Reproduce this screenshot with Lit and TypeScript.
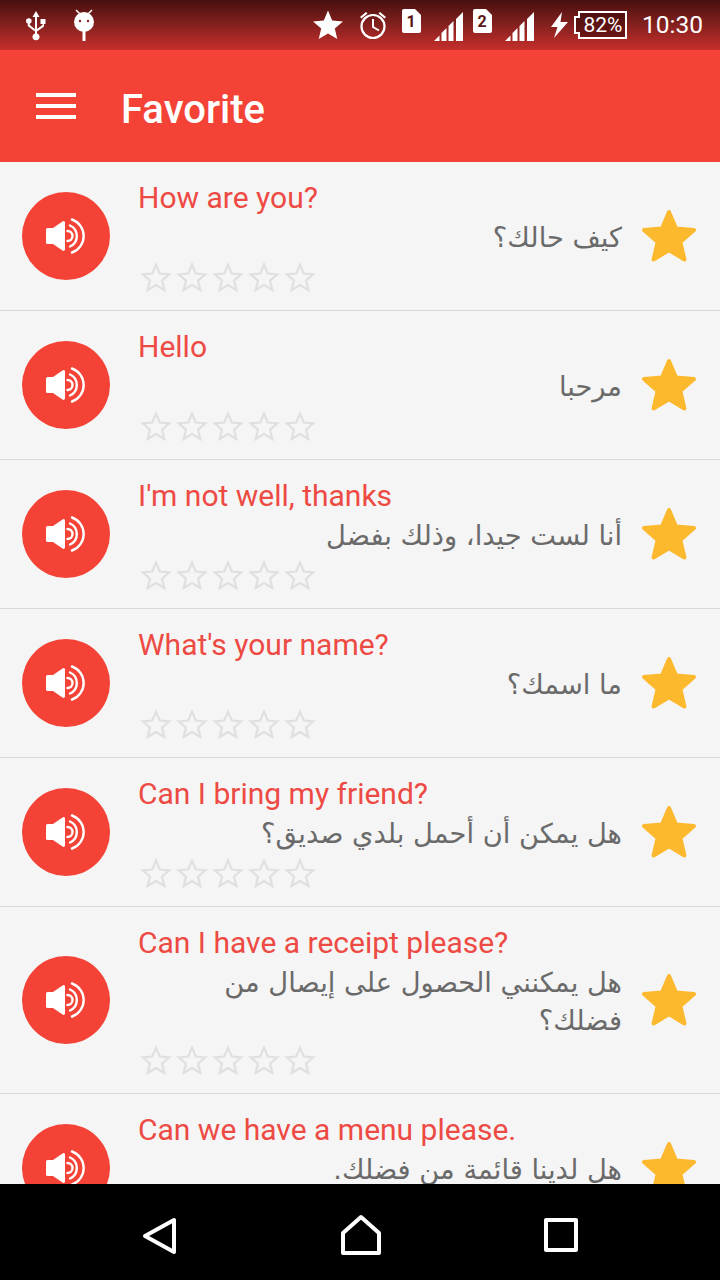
import { LitElement, html, css } from "lit";
import { customElement } from "lit/decorators.js";

const ROWS = [
  ["How are you?", "كيف حالك؟"],
  ["Hello", "مرحبا"],
  ["I'm not well, thanks", "أنا لست جيدا، وذلك بفضل"],
  ["What's your name?", "ما اسمك؟"],
  ["Can I bring my friend?", "هل يمكن أن أحمل بلدي صديق؟"],
  ["Can I have a receipt please?", "هل يمكنني الحصول على إيصال من فضلك؟"],
  ["Can we have a menu please.", "هل لدينا قائمة من فضلك."],
];

const STAR = "M12 17.27L18.18 21l-1.64-7.03L22 9.24l-7.19-.61L12 2 9.19 8.63 2 9.24l5.46 4.73L5.82 21z";

@customElement("app-root")
export class AppRoot extends LitElement {
  static styles = css`
    :host { display: flex; flex-direction: column; width: 720px; height: 1280px; overflow: hidden; font-family: Roboto, "Liberation Sans", sans-serif; background: #000; }
    .status { height: 50px; flex: none; display: flex; align-items: flex-start; background: linear-gradient(#471010, #7f1f1d 45%, #c62f2c); color: #fff; }
    .status svg { display: block; flex: none; fill: #fff; }
    .time { font-size: 24.500px; line-height: 50px; margin-left: 15px; }
    .batt { margin-left: 5px; margin-top: 11px; width: 54px; height: 28px; position: relative; flex: none; }
    .batt span { position: absolute; left: 6px; right: 0; top: 0; bottom: 0; display: flex; align-items: center; justify-content: center; font-size: 21px; color: #fff; }
    .toolbar { height: 112px; flex: none; background: #f44336; display: flex; align-items: center; color: #fff; padding-left: 36px; }
    .menu { width: 40px; display: flex; flex-direction: column; gap: 7px; }
    .menu i { display: block; height: 4px; background: #fff; }
    .title { font-size: 40px; font-weight: 500; margin: 6px 0 0 45px; }
    .list { flex: 1; min-height: 0; overflow: hidden; background: #f5f5f5; }
    .row { display: flex; align-items: center; border-bottom: 1px solid #d9d9d9; }
    .play { flex: none; width: 88px; height: 88px; border-radius: 50%; background: #f44336; margin-left: 22px; display: flex; align-items: center; justify-content: center; }
    .body { flex: 1; min-width: 0; margin-left: 28px; padding: 17px 0 14px; }
    .en { font-size: 30px; line-height: 38px; margin-bottom: 2px; color: #ee4a44; }
    .ar { direction: rtl; text-align: right; font-family: "DejaVu Sans", sans-serif; font-size: 27.300px; line-height: 38px; color: #6a6a6a; }
    .rate { display: flex; gap: 4px; height: 36px; align-items: center; margin-top: 3px; margin-left: 2px; }
    .rate svg { display: block; fill: none; stroke: #e0e0e0; stroke-width: 1.700; }
    .fav { flex: none; width: 60px; height: 60px; margin: 2px 21px 0 17px; fill: #fdb92e; stroke: #fdb92e; stroke-width: 1.600; stroke-linejoin: round; display: block; }
    .nav { height: 96px; flex: none; background: #000; display: flex; align-items: flex-start; }
    .nav svg { display: block; flex: none; fill: none; stroke: #fff; stroke-width: 4; stroke-linejoin: round; }
  `;

  private signal(ml: number) {
    return html`<svg style="margin-left:${ml}px;margin-top:12px" width="30" height="29" viewBox="0 0 30 29"><path d="M0 29l5.500-5.500V29zM7.500 29v-8l5-5v13zM14.500 29V14l5-5v20zM22 29V7l7-7v29z"/></svg>`;
  }

  private sim(ml: number, t: string) {
    return html`<svg style="margin-left:${ml}px;margin-top:9px" width="19" height="24" viewBox="0 0 19 24"><path d="M2 0h11l6 6v16a2 2 0 0 1-2 2H2a2 2 0 0 1-2-2V2a2 2 0 0 1 2-2z"/><text x="9" y="18" text-anchor="middle" font-size="16" font-weight="700" font-family="Roboto" fill="#5a1515">${t}</text></svg>`;
  }

  private speaker() {
    return html`<svg width="40" height="36" viewBox="0 0 40 36"><path fill="#fff" d="M0 11.500q0-1.500 1.500-1.500H7L16.500 3.500q2-1.200 2.500 1v27q-.5 2.200-2.500 1L7 26H1.500Q0 26 0 24.500z"/><g fill="none" stroke="#fff" stroke-width="2.400" stroke-linecap="round"><path d="M21.500 13a5 5 0 0 1 0 10"/><path d="M24 7.500a11.500 11.500 0 0 1 0 21"/><path d="M26 1.500a17.500 17.500 0 0 1 0 33"/></g></svg>`;
  }

  render() {
    return html`
      <div class="status">
        <svg style="margin-left:26px;margin-top:11px" width="20" height="30" viewBox="0 0 20 30"><path d="M10 0l3.500 6H11v16.500a3.500 3.500 0 1 1-2 0V6H6.500z"/><circle cx="2.800" cy="10" r="2.800"/><path d="M1.800 10h2v4l5 4v2.500l-7-5.500zM14.500 8h5v5h-1.500v2.500l-7 5V18l5.500-4v-1h-2z"/></svg>
        <svg style="margin-left:28px;margin-top:9px" width="20" height="32" viewBox="0 0 20 32"><path d="M2 1l3.500 3.500M18 1l-3.500 3.500" stroke="#fff" stroke-width="1.500" fill="none"/><circle cx="10" cy="13" r="10"/><rect x="8.500" y="22" width="3" height="10"/><circle cx="6" cy="12" r="1.200" fill="#8a2422"/><circle cx="14" cy="12" r="1.200" fill="#8a2422"/></svg>
        <svg style="margin-left:219px;margin-top:10px" width="30" height="30" viewBox="2 2 20 19.270"><path d="${STAR}"/></svg>
        <svg style="margin-left:16px;margin-top:10px" width="28" height="30" viewBox="0 0 28 30"><circle cx="14" cy="16.500" r="11.500" fill="none" stroke="#fff" stroke-width="2.200"/><path d="M14 9v8l6 3.500" fill="none" stroke="#fff" stroke-width="2"/><path d="M1 7l6-5 1.500 1.500-6 5zM27 7l-6-5-1.500 1.500 6 5z"/></svg>
        ${this.sim(15, "1")}
        ${this.signal(13)}
        ${this.sim(9, "2")}
        ${this.signal(13)}
        <svg style="margin-left:16px;margin-top:12px" width="17" height="26" viewBox="0 0 17 26"><path d="M11 0L0 15h6.500L3 26l14-16h-7.500z"/></svg>
        <div class="batt">
          <svg width="54" height="28" viewBox="0 0 54 28"><path d="M6 1h47v26H6v-5H2V6h4z" fill="rgba(60,10,10,.55)" stroke="#fff" stroke-width="2"/></svg>
          <span>82%</span>
        </div>
        <span class="time">10:30</span>
      </div>
      <div class="toolbar">
        <div class="menu"><i></i><i></i><i></i></div>
        <span class="title">Favorite</span>
      </div>
      <div class="list">
        ${ROWS.map(([en, ar]) => html`
          <div class="row">
            <div class="play">${this.speaker()}</div>
            <div class="body">
              <div class="en">${en}</div>
              <div class="ar">${ar}</div>
              <div class="rate">${[0, 1, 2, 3, 4].map(() => html`<svg width="32" height="32" viewBox="0 0 24 24"><path d="${STAR}"/></svg>`)}</div>
            </div>
            <svg class="fav" viewBox="0 0 24 24"><path d="${STAR}"/></svg>
          </div>`)}
      </div>
      <div class="nav">
        <svg style="margin-left:142px;margin-top:32px" width="35" height="40" viewBox="0 0 35 40"><path d="M32 4v32L3 20z"/></svg>
        <svg style="margin-left:164px;margin-top:30px" width="40" height="41" viewBox="0 0 40 41"><path d="M20 3L38 19v20H2V19z"/></svg>
        <svg style="margin-left:163px;margin-top:34px" width="34" height="34" viewBox="0 0 34 34"><rect x="2" y="2" width="30" height="30"/></svg>
      </div>
    `;
  }
}
